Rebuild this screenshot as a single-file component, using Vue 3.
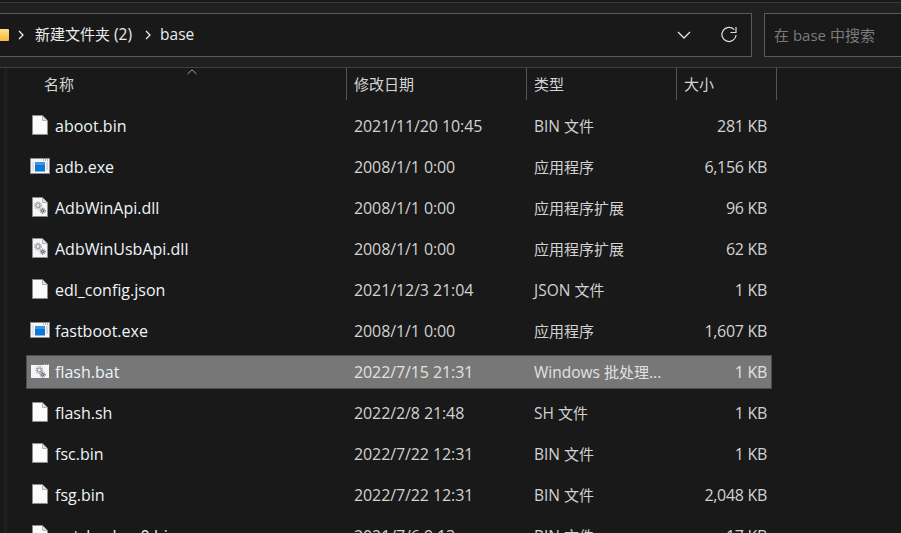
<script setup>
const rows = [
  { name: 'aboot.bin', date: '2021/11/20 10:45', type: 'BIN 文件', size: '281 KB', icon: 'file' },
  { name: 'adb.exe', date: '2008/1/1 0:00', type: '应用程序', size: '6,156 KB', icon: 'exe' },
  { name: 'AdbWinApi.dll', date: '2008/1/1 0:00', type: '应用程序扩展', size: '96 KB', icon: 'dll' },
  { name: 'AdbWinUsbApi.dll', date: '2008/1/1 0:00', type: '应用程序扩展', size: '62 KB', icon: 'dll' },
  { name: 'edl_config.json', date: '2021/12/3 21:04', type: 'JSON 文件', size: '1 KB', icon: 'file' },
  { name: 'fastboot.exe', date: '2008/1/1 0:00', type: '应用程序', size: '1,607 KB', icon: 'exe' },
  { name: 'flash.bat', date: '2022/7/15 21:31', type: 'Windows 批处理...', size: '1 KB', icon: 'bat', selected: true },
  { name: 'flash.sh', date: '2022/2/8 21:48', type: 'SH 文件', size: '1 KB', icon: 'file' },
  { name: 'fsc.bin', date: '2022/7/22 12:31', type: 'BIN 文件', size: '1 KB', icon: 'file' },
  { name: 'fsg.bin', date: '2022/7/22 12:31', type: 'BIN 文件', size: '2,048 KB', icon: 'file' },
  { name: 'gpt_backup0.bin', date: '2021/7/6 9:13', type: 'BIN 文件', size: '17 KB', icon: 'file' },
]
// Chinese runs are set at a fixed 15px, next to slightly larger Latin runs.
const seg = (text) =>
  text.split(/([\u4e00-\u9fff]+)/).filter(Boolean).map((t) => ({ t, zh: /[\u4e00-\u9fff]/.test(t) }))
</script>

<template>
  <div class="window">
    <div class="toolbar">
      <div class="address">
        <span class="folder"></span>
        <svg class="chev" width="8" height="10" viewBox="0 0 8 10"><path d="M2 1 6 5 2 9" fill="none" stroke="#ececec" stroke-width="1.3"/></svg>
        <span class="crumb"><span v-for="s in seg('新建文件夹 (2)')" :key="s.t" :class="{ zh: s.zh }">{{ s.t }}</span></span>
        <svg class="chev two" width="8" height="10" viewBox="0 0 8 10"><path d="M2 1 6 5 2 9" fill="none" stroke="#ececec" stroke-width="1.3"/></svg>
        <span class="crumb">base</span>
        <span class="spacer"></span>
        <svg class="down" width="14" height="8" viewBox="0 0 14 8"><path d="M1 1 7 7 13 1" fill="none" stroke="#e4e4e4" stroke-width="1.3"/></svg>
        <svg class="refresh" width="18" height="18" viewBox="0 0 18 18"><path d="M14.2 3.600A7.100 7.100 0 1 0 16.100 9" fill="none" stroke="#dcdcdc" stroke-width="1.200"/><path d="M10.500 6.500h5.500V1" fill="none" stroke="#dcdcdc" stroke-width="1.200"/></svg>
      </div>
      <div class="search">在 base 中搜索</div>
    </div>
    <div class="body">
      <div class="head">
        <div class="h name">名称<svg class="sort" width="10" height="6" viewBox="0 0 10 6"><path d="M.5 5 5 .8 9.500 5" fill="none" stroke="#a0a0a0"/></svg></div>
        <div class="h date">修改日期</div>
        <div class="h type">类型</div>
        <div class="h size">大小</div>
      </div>
      <div class="list">
        <div v-for="r in rows" :key="r.name" class="row" :class="{ selected: r.selected }">
          <div class="c-name">
            <span class="icon">
              <svg v-if="r.icon === 'file'" width="16" height="20" viewBox="0 0 16 20"><path d="M.5.500h10l5 5v14H.500z" fill="#fbfbfb" stroke="#8c8c8c"/><path d="M10.500 1v4.500H15" fill="#dcdcdc" stroke="#b4b4b4"/></svg>
              <svg v-else-if="r.icon === 'exe'" width="20" height="16" viewBox="0 0 20 16"><rect x=".5" y=".5" width="19" height="15" fill="#f6f6f6" stroke="#8f8f8f"/><rect x="5" y="4" width="10" height="9.500" fill="#0f78d4"/><rect x="5" y="4" width="10" height="3" fill="#3b95e2"/><path d="M16 5h2M16 7h2M16 9h2M16 11h2" stroke="#bdbdbd"/><path d="M3 3.500v10" stroke="#d0d0d0"/><path d="M13 2h1m1 0h1m1 0h1" stroke="#777"/></svg>
              <svg v-else-if="r.icon === 'dll'" width="16" height="20" viewBox="0 0 16 20"><path d="M.5.500h10l5 5v14H.500z" fill="#f6f6f6" stroke="#8c8c8c"/><path d="M10.500 1v4.500H15" fill="#dcdcdc" stroke="#b4b4b4"/><circle cx="6" cy="8.500" r="3.400" fill="none" stroke="#9aa2ac" stroke-width="1.200" stroke-dasharray="1.300 1"/><circle cx="6" cy="8.500" r="2" fill="#eef0f2" stroke="#8d96a1" stroke-width="1.200"/><circle cx="10.700" cy="13.700" r="2.500" fill="none" stroke="#4e5258" stroke-width="1" stroke-dasharray="1 .8"/><circle cx="10.700" cy="13.700" r="1.300" fill="#d8d8d8" stroke="#44484e"/></svg>
              <svg v-else width="18" height="14" viewBox="0 0 18 14"><rect y="1" width="18" height="13" fill="#f6f6f6"/><path d="M13 .5h1m1 0h1m1 0h1" stroke="#bbb"/><circle cx="8.300" cy="6" r="3.400" fill="none" stroke="#9aa2ac" stroke-width="1.200" stroke-dasharray="1.300 1"/><circle cx="8.300" cy="6" r="2" fill="#eef0f2" stroke="#8d96a1" stroke-width="1.200"/><circle cx="11.700" cy="10.700" r="2.500" fill="none" stroke="#4e5258" stroke-width="1" stroke-dasharray="1 .8"/><circle cx="11.700" cy="10.700" r="1.300" fill="#d8d8d8" stroke="#44484e"/></svg>
            </span>
            <span class="fname">{{ r.name }}</span>
          </div>
          <div class="c-date">{{ r.date }}</div>
          <div class="c-type"><span v-for="s in seg(r.type)" :key="s.t" :class="{ zh: s.zh }">{{ s.t }}</span></div>
          <div class="c-size">{{ r.size }}</div>
        </div>
      </div>
    </div>
  </div>
</template>

<style>
html, body { margin: 0; background: #191919; }
</style>

<style scoped>
.window {
  width: 901px;
  height: 533px;
  overflow: hidden;
  background: #191919;
  color: #e4e4e4;
  font-family: "Open Sans", "Noto Sans CJK SC", sans-serif;
  font-size: 16px;
  line-height: 20px;
  display: flex;
  flex-direction: column;
}
.zh { font-size: 15px; }
.toolbar {
  height: 66px;
  box-sizing: border-box;
  margin-top: 2px;
  padding-top: 10px;
  background: #202020;
  border-top: 1px solid #3a3a3a;
  border-bottom: 1px solid #3f3f3f;
  display: flex;
  gap: 12px;
  flex: none;
}
.address, .search {
  height: 44px;
  box-sizing: border-box;
  background: #191919;
  border: 1px solid #5a5a5a;
  display: flex;
  align-items: center;
}
.address { width: 752px; border-left: 0; }
.search { flex: 1; padding-left: 9px; border-right: 0; color: #7b7b7b; white-space: pre; font-size: 15px; }
.folder {
  width: 9px;
  height: 12px;
  background: linear-gradient(#ffe08a, #f5b93a);
  border-radius: 0 1px 1px 0;
  flex: none;
}
.chev { margin-left: 8px; margin-right: 10px; flex: none; }
.chev.two { margin-left: 12px; margin-right: 8px; }
.crumb { color: #ececec; white-space: pre; font-size: 15.5px; padding-bottom: 2px; }
.spacer { flex: 1; }
.down { margin-right: 29px; }
.refresh { margin-right: 13px; }
.body {
  flex: 1;
  margin-left: 4px;
  border-left: 3px solid #1f1f1f;
}
.head { display: flex; height: 32px; }
.h {
  box-sizing: border-box;
  height: 32px;
  padding-left: 7px;
  line-height: 32px;
  font-size: 15px;
  color: #d4d4d4;
  border-right: 1px solid #555;
  position: relative;
}
.h.name { width: 340px; padding-left: 37px; }
.h.date { width: 180px; }
.h.type { width: 150px; }
.h.size { width: 100px; }
.sort { position: absolute; left: 180px; top: 1px; }
.list { padding-top: 9px; margin-left: 19px; }
.row {
  display: flex;
  height: 34px;
  margin-bottom: 7px;
  box-sizing: border-box;
  align-items: center;
  width: 746px;
  border: 1px solid transparent;
}
.row.selected {
  background: #777;
  border-color: #4c4c4c;
}
.c-name { width: 321px; display: flex; align-items: center; }
.icon { width: 26px; margin-right: 2px; margin-top: -2px; display: flex; justify-content: center; flex: none; }
.fname { color: #eef4f8; white-space: nowrap; }
.c-date { width: 180px; padding-left: 6px; box-sizing: border-box; color: #d2d2d2; letter-spacing: -0.1px; }
.c-type { width: 150px; padding-left: 6px; box-sizing: border-box; color: #d2d2d2; white-space: pre; font-size: 15.5px; }
.c-size { flex: 1; text-align: right; padding-right: 4px; color: #d2d2d2; letter-spacing: -0.3px; }
.selected .c-date, .selected .c-type, .selected .c-size { color: #e2e2e2; }
</style>
